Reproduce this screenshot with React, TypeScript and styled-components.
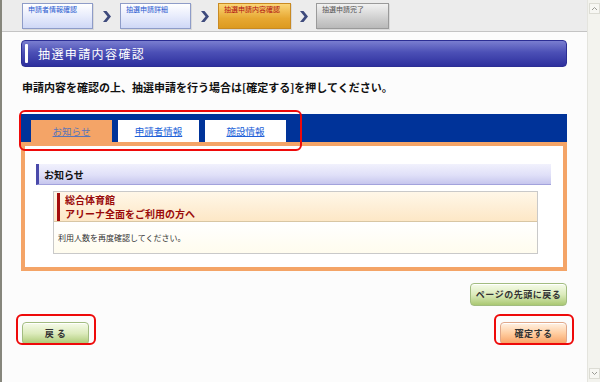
import React from 'react'
import styled, { createGlobalStyle } from 'styled-components'

const GlobalStyle = createGlobalStyle`
  html, body {
    margin: 0;
    padding: 0;
  }
  body {
    font-family: "Noto Sans CJK JP", "Noto Sans", sans-serif;
    background: #fcfcfc;
  }
`

const Frame = styled.div`
  display: flex;
  width: 600px;
  height: 382px;
  overflow: hidden;
  box-sizing: border-box;
  border-left: 2px solid #86867c;
`

const Page = styled.div`
  flex: 1;
  min-width: 0;
  display: flex;
  flex-direction: column;
  background: #fcfcfc;
`

const Scrollbar = styled.div`
  width: 12px;
  background: #f3f3ee;
  border-left: 1px solid #e4e4de;
  display: flex;
  flex-direction: column;
  justify-content: space-between;
  align-items: center;
  padding: 3px 0;
`

const ScrollArrow = styled.div`
  width: 9px;
  height: 9px;
  border: 1px solid #dcdcd4;
  background: #f7f7f3;
  display: flex;
  align-items: center;
  justify-content: center;
`

const Header = styled.div`
  height: 32px;
  background: #ececec;
  border-bottom: 1px solid #c4c4c4;
  display: flex;
  align-items: flex-start;
  padding: 3px 0 0 20px;
  box-sizing: border-box;
`

const Step = styled.div<{ $w: number; $kind: 'done' | 'now' | 'next' }>`
  width: ${(p) => p.$w}px;
  height: 26px;
  box-sizing: border-box;
  padding: 1px 5px;
  font-size: 7px;
  line-height: 9px;
  border: 1px solid
    ${(p) => (p.$kind === 'now' ? '#c98a22' : p.$kind === 'next' ? '#9a9a9a' : '#8e9cc8')};
  background: ${(p) =>
    p.$kind === 'now'
      ? 'linear-gradient(#fbd678, #e7a832 60%, #dc9a20)'
      : p.$kind === 'next'
      ? 'linear-gradient(#f2f2f2, #c9c9c9 70%, #b9b9b9)'
      : 'linear-gradient(#ffffff, #e8ecfc 50%, #cfd8f6)'};
  color: ${(p) => (p.$kind === 'now' ? '#b01010' : p.$kind === 'next' ? '#555' : '#2a5bd0')};
  box-shadow: 1px 1px 0 rgba(0, 0, 0, 0.08);
`

const Chevron = styled.div<{ $w: number }>`
  width: ${(p) => p.$w}px;
  height: 26px;
  display: flex;
  align-items: center;
  justify-content: center;
`

const Content = styled.div`
  padding: 8px 20px 0 19px;
  display: flex;
  flex-direction: column;
`

const TitleBar = styled.div`
  height: 27px;
  box-sizing: border-box;
  border: 1px solid #2c2e94;
  border-radius: 4px;
  background: linear-gradient(#7a7ed0, #4c50b6 45%, #2e309e);
  display: flex;
  align-items: center;
  padding-left: 3px;
  color: #fff;
  font-size: 12px;
  letter-spacing: 1.4px;
`

const TitleMark = styled.span`
  width: 3px;
  height: 19px;
  background: #fff;
  border-radius: 1px;
  margin-right: 10px;
`

const Lead = styled.p`
  margin: 14px 0 0 1px;
  font-size: 11px;
  line-height: 13px;
  font-weight: bold;
  color: #111;
`

const Marked = styled.div`
  position: relative;
`

const Ring = styled.span<{ $t: number; $l: number; $w: number; $h: number }>`
  position: absolute;
  top: ${(p) => p.$t}px;
  left: ${(p) => p.$l}px;
  width: ${(p) => p.$w}px;
  height: ${(p) => p.$h}px;
  box-sizing: border-box;
  border: 2.5px solid #ee0a0a;
  border-radius: 6px;
  pointer-events: none;
`

const TabBar = styled.div`
  margin-top: 20px;
  height: 28px;
  background: #003399;
  display: flex;
  align-items: flex-end;
  gap: 6px;
  padding-left: 10px;
`

const Tab = styled.a<{ $active?: boolean }>`
  width: 81px;
  height: 22px;
  display: flex;
  align-items: center;
  justify-content: center;
  font-size: 9.5px;
  text-decoration: underline;
  color: ${(p) => (p.$active ? '#5a75b8' : '#2060d8')};
  background: ${(p) => (p.$active ? '#f4a467' : '#fff')};
  cursor: pointer;
`

const Panel = styled.div`
  border: 4px solid #f4a467;
  background: #fff;
  padding: 18px 12px 13px 11px;
`

const SectionHead = styled.div`
  height: 21px;
  box-sizing: border-box;
  background: linear-gradient(#f1f1fd, #e0e0f8 55%, #c6c6ee);
  border-left: 3px solid #4a4aaa;
  border-bottom: 1px solid #a2a2dc;
  display: flex;
  align-items: center;
  padding-left: 5px;
  font-size: 10px;
  font-weight: bold;
  color: #111;
`

const Card = styled.div`
  margin: 6px 13px 0 17px;
  border: 1px solid #c9c9c9;
`

const CardHead = styled.div`
  padding: 1px 6px 0 3px;
  background: linear-gradient(#fff7e8, #fde7c6);
  border-bottom: 1px solid #d8c6a4;
`

const CardTitle = styled.div`
  border-left: 3px solid #a40c0c;
  padding-left: 5px;
  font-size: 10px;
  font-weight: bold;
  color: #9a0a0a;
`

const CardLine = styled.div`
  line-height: 14px;
`

const CardBody = styled.div`
  height: 31px;
  display: flex;
  align-items: center;
  padding: 0 4px;
  font-size: 8px;
  color: #333;
  background: linear-gradient(#ffffff, #fffcee);
`

const TopRow = styled.div`
  display: flex;
  justify-content: flex-end;
  margin-top: 12px;
`

const ActionRow = styled.div`
  display: flex;
  justify-content: space-between;
  margin-top: 12px;
  padding-left: 1px;
`

const Button = styled.button<{ $tone: 'green' | 'orange'; $w: number }>`
  width: ${(p) => p.$w}px;
  height: 23px;
  border-radius: 4px;
  border: 1px solid ${(p) => (p.$tone === 'green' ? '#a2bc80' : '#e0a88a')};
  background: ${(p) =>
    p.$tone === 'green'
      ? 'linear-gradient(#f6fbea, #dcebbc 50%, #aac872)'
      : 'linear-gradient(#fff2e4, #ffcda0 50%, #f8a062)'};
  box-shadow: inset 0 1px 0 #fff;
  font-family: inherit;
  font-size: 9px;
  font-weight: bold;
  color: #333;
  letter-spacing: 0.5px;
  padding: 0;
  cursor: pointer;
`

const steps: { label: string; w: number; kind: 'done' | 'now' | 'next'; gap: number }[] = [
  { label: '申請者情報確認', w: 71, kind: 'done', gap: 27 },
  { label: '抽選申請詳細', w: 71, kind: 'done', gap: 27 },
  { label: '抽選申請内容確認', w: 73, kind: 'now', gap: 25 },
  { label: '抽選申請完了', w: 73, kind: 'next', gap: 0 },
]

const ChevronIcon = () => (
  <svg width="8" height="11" viewBox="0 0 8 11">
    <polygon points="0,0 3.5,0 8,5.5 3.5,11 0,11 4.5,5.5" fill="#3e4a7c" />
  </svg>
)

const Arrow = ({ up }: { up?: boolean }) => (
  <svg width="7" height="5" viewBox="0 0 7 5">
    <polyline
      points={up ? '1,4 3.5,1.5 6,4' : '1,1 3.5,3.5 6,1'}
      fill="none"
      stroke="#9a9a94"
      strokeWidth="1"
    />
  </svg>
)

export default function App() {
  return (
    <>
      <GlobalStyle />
      <Frame>
        <Page>
          <Header>
            {steps.map((s) => (
              <React.Fragment key={s.label}>
                <Step $w={s.w} $kind={s.kind}>{s.label}</Step>
                {s.gap > 0 && (
                  <Chevron $w={s.gap}>
                    <ChevronIcon />
                  </Chevron>
                )}
              </React.Fragment>
            ))}
          </Header>

          <Content>
            <TitleBar>
              <TitleMark />
              抽選申請内容確認
            </TitleBar>

            <Lead>申請内容を確認の上、抽選申請を行う場合は[確定する]を押してください。</Lead>

            <Marked>
              <TabBar>
                <Tab $active>お知らせ</Tab>
                <Tab>申請者情報</Tab>
                <Tab>施設情報</Tab>
              </TabBar>
              <Ring $t={16} $l={-2} $w={283} $h={41} />
            </Marked>

            <Panel>
              <SectionHead>お知らせ</SectionHead>
              <Card>
                <CardHead>
                  <CardTitle>
                    <CardLine>総合体育館</CardLine>
                    <CardLine>アリーナ全面をご利用の方へ</CardLine>
                  </CardTitle>
                </CardHead>
                <CardBody>利用人数を再度確認してください。</CardBody>
              </Card>
            </Panel>

            <TopRow>
              <Button $tone="green" $w={97}>ページの先頭に戻る</Button>
            </TopRow>

            <ActionRow>
              <Marked>
                <Button $tone="green" $w={67}>戻 る</Button>
                <Ring $t={-4} $l={-6} $w={80} $h={31} />
              </Marked>
              <Marked>
                <Button $tone="orange" $w={67}>確定する</Button>
                <Ring $t={-4} $l={-6} $w={80} $h={31} />
              </Marked>
            </ActionRow>
          </Content>
        </Page>
        <Scrollbar>
          <ScrollArrow>
            <Arrow up />
          </ScrollArrow>
          <ScrollArrow>
            <Arrow />
          </ScrollArrow>
        </Scrollbar>
      </Frame>
    </>
  )
}
